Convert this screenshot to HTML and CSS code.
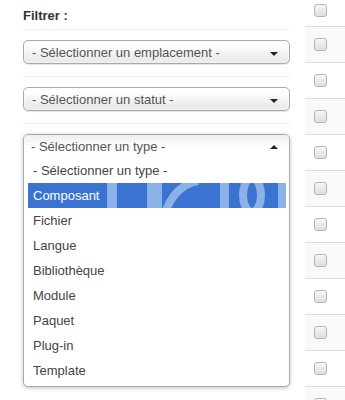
FILE: index.html
```html
<!DOCTYPE html>
<html lang="fr">

<head>
    <meta charset="UTF-8" />
    <meta name="viewport" content="width=device-width, initial-scale=1.0" />
    <title>Filtrer</title>
    <link rel="stylesheet" href="styles.css">
</head>

<body>
    <div class="page">
        <div class="sidebar">
            <h3 class="filter-title">Filtrer :</h3>

            <div class="filter-group">
                <div class="select">
                    <span>- Sélectionner un emplacement -</span>
                    <b class="caret"></b>
                </div>
            </div>

            <div class="filter-group">
                <div class="select">
                    <span>- Sélectionner un statut -</span>
                    <b class="caret"></b>
                </div>
            </div>

            <div class="filter-group last">
                <div class="select-open">
                    <div class="select-head">
                        <span>- Sélectionner un type -</span>
                        <b class="caret up"></b>
                    </div>
                    <ul class="options">
                        <li>- Sélectionner un type -</li>
                        <li class="active">
                            <svg class="watermark" width="258" height="25" viewBox="0 0 258 25">
                                <rect x="79" y="0" width="10" height="25" />
                                <rect x="119" y="0" width="15" height="25" />
                                <path d="M138 27 Q148 2 170 -2" />
                                <rect x="192" y="0" width="9" height="25" />
                                <ellipse cx="224" cy="12" rx="9" ry="17" />
                                <rect x="250" y="0" width="8" height="25" />
                            </svg>
                            <span>Composant</span>
                        </li>
                        <li>Fichier</li>
                        <li>Langue</li>
                        <li>Bibliothèque</li>
                        <li>Module</li>
                        <li>Paquet</li>
                        <li>Plug-in</li>
                        <li>Template</li>
                    </ul>
                </div>
            </div>
        </div>

        <div class="list-col">
            <div class="row first"><span class="checkbox"></span></div>
            <div class="row odd"><span class="checkbox"></span></div>
            <div class="row"><span class="checkbox"></span></div>
            <div class="row odd"><span class="checkbox"></span></div>
            <div class="row"><span class="checkbox"></span></div>
            <div class="row odd"><span class="checkbox"></span></div>
            <div class="row"><span class="checkbox"></span></div>
            <div class="row odd"><span class="checkbox"></span></div>
            <div class="row"><span class="checkbox"></span></div>
            <div class="row odd"><span class="checkbox"></span></div>
            <div class="row"><span class="checkbox"></span></div>
            <div class="row odd"><span class="checkbox"></span></div>
        </div>
    </div>
</body>

</html>
```

FILE: styles.css
```css
body {
    margin: 0;
    font-family: "Liberation Sans", Arial, sans-serif;
    font-size: 13px;
    color: #444;
    background-color: #fff;
}

.page {
    display: flex;
    height: 400px;
    overflow: hidden;
}

.sidebar {
    width: 267px;
    margin-left: 23px;
    margin-right: 15px;
}

.filter-title {
    margin: 0;
    padding: 8px 0 5px;
    line-height: 16px;
    font-size: 13px;
    font-weight: bold;
    color: #333;
    border-bottom: 1px solid #eee;
}

.filter-group {
    padding: 10px 0 12px;
    border-bottom: 1px solid #eee;
}

.filter-group.last {
    border-bottom: none;
}

.select {
    display: flex;
    align-items: center;
    justify-content: space-between;
    height: 24px;
    box-sizing: border-box;
    padding: 0 11px 0 8px;
    border: 1px solid #aaa;
    border-radius: 5px;
    background: linear-gradient(#fff 20%, #f4f4f4 50%, #e8e8e8);
    box-shadow: 0 0 3px #fff inset, 0 1px 1px rgba(0, 0, 0, 0.1);
    color: #555;
}

.caret {
    width: 0;
    height: 0;
    border-left: 4px solid transparent;
    border-right: 4px solid transparent;
    border-top: 4px solid #222;
    margin-top: 3px;
}

.caret.up {
    border-top: none;
    border-bottom: 4px solid #222;
    margin-top: 0;
}

.select-open {
    border: 1px solid #aaa;
    border-radius: 5px;
    background-color: #fff;
    box-shadow: 0 1px 4px rgba(0, 0, 0, 0.25);
    overflow: hidden;
}

.select-head {
    display: flex;
    align-items: center;
    justify-content: space-between;
    height: 23px;
    padding: 0 11px 0 7px;
    background: linear-gradient(#eee, #fff 60%);
    color: #555;
}

.options {
    list-style: none;
    margin: 0;
    padding: 0 3px 3px 4px;
}

.options li {
    position: relative;
    height: 25px;
    line-height: 25px;
    padding-left: 5px;
    color: #444;
}

.options li.active {
    background-color: #3a73d2;
    color: #fff;
}

.options li.active span {
    position: relative;
}

.watermark {
    position: absolute;
    left: 0;
    top: 0;
}

.watermark rect {
    fill: #8cb0e8;
}

.watermark path,
.watermark ellipse {
    fill: none;
    stroke: #8cb0e8;
    stroke-width: 8;
}

.list-col {
    flex: 1;
    display: flex;
    flex-direction: column;
}

.row {
    display: flex;
    align-items: center;
    flex-shrink: 0;
    height: 36px;
    box-sizing: border-box;
    padding-left: 9px;
    border-bottom: 1px solid #ddd;
}

.row.first {
    height: 27px;
    padding-bottom: 6px;
}

.row.odd {
    background-color: #f9f9f9;
}

.checkbox {
    width: 11px;
    height: 11px;
    border: 1px solid #b4b4b4;
    border-radius: 3px;
    background: linear-gradient(#f6f6f6, #dedede);
    box-shadow: 0 0 1px #fff inset;
}
```
